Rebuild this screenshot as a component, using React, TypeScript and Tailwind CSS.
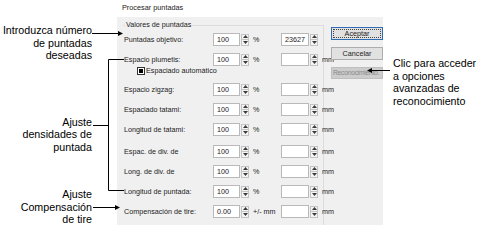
import React from 'react'

// Small up/down spinner beside each numeric field
function Spin() {
  return (
    <div className="ml-[1px] flex h-[12px] w-[8px] shrink-0 flex-col border border-[#c4c4c4] bg-[#f4f4f4]">
      <div className="flex flex-1 items-center justify-center border-b border-[#c4c4c4]">
        <svg width="5" height="3" viewBox="0 0 5 3">
          <path d="M2.5 0L5 3H0z" fill="#3a3a3a" />
        </svg>
      </div>
      <div className="flex flex-1 items-center justify-center">
        <svg width="5" height="3" viewBox="0 0 5 3">
          <path d="M0 0H5L2.5 3z" fill="#3a3a3a" />
        </svg>
      </div>
    </div>
  )
}

function Field({ value, w }: { value?: string; w: string }) {
  return (
    <div className={`flex h-[13px] shrink-0 items-center border border-[#b9b9b9] bg-white pl-[3px] ${w}`}>
      {value}
    </div>
  )
}

type Row = { label: string; a: string; unitA: string; b?: string; unitB?: string; mt: string }

const rows: Row[] = [
  { label: 'Puntadas objetivo:', a: '100', unitA: '%', b: '23627', unitB: '', mt: 'mt-0' },
  { label: 'Espacio plumetis:', a: '100', unitA: '%', unitB: 'mm', mt: 'mt-[7px]' },
]

const rows2: Row[] = [
  { label: 'Espacio zigzag:', a: '100', unitA: '%', unitB: 'mm', mt: 'mt-[8px]' },
  { label: 'Espaciado tatami:', a: '100', unitA: '%', unitB: 'mm', mt: 'mt-[7px]' },
  { label: 'Longitud de tatami:', a: '100', unitA: '%', unitB: 'mm', mt: 'mt-[7px]' },
  { label: 'Espac. de div. de', a: '100', unitA: '%', unitB: 'mm', mt: 'mt-[9px]' },
  { label: 'Long. de div. de', a: '100', unitA: '%', unitB: 'mm', mt: 'mt-[7px]' },
  { label: 'Longitud de puntada:', a: '100', unitA: '%', unitB: 'mm', mt: 'mt-[7px]' },
  { label: 'Compensación de tire:', a: '0.00', unitA: '+/- mm', unitB: 'mm', mt: 'mt-[7px]' },
]

function ValueRow({ row }: { row: Row }) {
  return (
    <div className={`flex h-[13px] items-center whitespace-nowrap ${row.mt}`}>
      <span className="w-[89px] shrink-0">{row.label}</span>
      <Field value={row.a} w="w-[27px]" />
      <Spin />
      <span className="ml-[4px] w-[28px] shrink-0">{row.unitA}</span>
      <Field value={row.b} w="w-[28px]" />
      <Spin />
      <span className="ml-[4px]">{row.unitB}</span>
    </div>
  )
}

export default function App() {
  return (
    <div className="relative flex h-[242px] w-[485px] overflow-hidden bg-white font-['Liberation_Sans',Arial,sans-serif]">
      {/* Left callouts */}
      <div className="w-[117px] shrink-0 pr-[25px] text-right text-[10.7px] leading-[12.5px] text-black">
        <div className="mt-[24px]">
          <div>Introduzca número</div>
          <div>de puntadas</div>
          <div>deseadas</div>
        </div>
        <div className="mt-[54px]">
          <div>Ajuste</div>
          <div>densidades de</div>
          <div>puntada</div>
        </div>
        <div className="mt-[35px]">
          <div>Ajuste</div>
          <div>Compensación</div>
          <div>de tire</div>
        </div>
      </div>

      {/* Dialog */}
      <div className="flex w-[266px] shrink-0 flex-col">
        <div className="h-[17px] pl-[5px] pt-[4px] text-[7.3px] leading-[8px] text-[#222]">Procesar puntadas</div>
        <div className="flex h-[208px] items-start overflow-hidden bg-[#f0f0f0] text-[7.2px] leading-[8px] text-[#1c1c1c]">
          {/* Group box */}
          <div className="relative ml-[6px] mt-[8px] h-[200px] w-[201px] shrink-0 border-t border-r border-[#dcdcdc]">
            <span className="absolute left-[2px] top-[-5px] bg-[#f0f0f0] px-[1px] leading-[8px]">Valores de puntadas</span>
            <div className="flex flex-col pl-[1px] pt-[7px]">
              {rows.map((r) => (
                <ValueRow key={r.label} row={r} />
              ))}
              <div className="ml-[13px] mt-[1px] flex h-[8px] items-center whitespace-nowrap">
                <div className="flex h-[8px] w-[8px] items-center justify-center border border-[#333] bg-white">
                  <div className="h-[4px] w-[4px] bg-black" />
                </div>
                <span className="ml-[1px]">Espaciado automático</span>
              </div>
              {rows2.map((r) => (
                <ValueRow key={r.label} row={r} />
              ))}
            </div>
          </div>

          {/* Buttons */}
          <div className="relative ml-[7px] mt-[10px] flex w-[52px] shrink-0 flex-col gap-[7px]">
            <div className="flex h-[13px] items-center justify-center border border-[#2f6db5] bg-[#e1e1e1] outline-1 outline-dotted outline-offset-[-3px] outline-[#444]">
              Aceptar
            </div>
            <div className="flex h-[13px] items-center justify-center border border-[#adadad] bg-[#e1e1e1]">
              Cancelar
            </div>
            <div className="flex h-[12px] items-center whitespace-nowrap border border-[#bfbfbf] bg-[#cccccc] pl-[1px] text-[6.8px] tracking-[-0.3px] text-[#8a8a8a]">
              Reconocimiento.
            </div>
          </div>
        </div>
      </div>

      {/* Right callout */}
      <div className="flex-1 pl-[10px] pt-[57px] text-[10.7px] leading-[12.7px] text-black">
        <div>Clic para acceder</div>
        <div>a opciones</div>
        <div>avanzadas de</div>
        <div>reconocimiento</div>
      </div>

      {/* Leader lines */}
      <svg className="pointer-events-none absolute left-0 top-0" width="485" height="242" viewBox="0 0 485 242">
        <g stroke="#000" strokeWidth="1" fill="none">
          <path d="M92 33.5H119" />
          <path d="M124 59.5H108.5V190.5H124" />
          <path d="M93 125.5H108.5" />
          <path d="M93 207.5H116" />
          <path d="M390 70.5H371" />
        </g>
        <g fill="#000">
          <path d="M123 33.5L118 31V36z" />
          <path d="M120 207.5L115 205V210z" />
          <path d="M367 70.5L372 68V73z" />
        </g>
      </svg>
    </div>
  )
}
